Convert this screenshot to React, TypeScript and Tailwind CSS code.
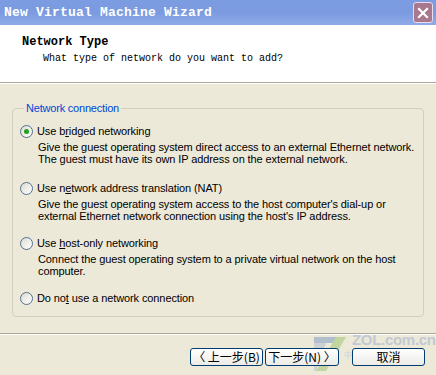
import React, { useState } from "react";

const options = [
  {
    id: "bridged",
    pre: "Use b",
    key: "r",
    post: "idged networking",
    desc: [
      "Give the guest operating system direct access to an external Ethernet network.",
      "The guest must have its own IP address on the external network.",
    ],
  },
  {
    id: "nat",
    pre: "Use n",
    key: "e",
    post: "twork address translation (NAT)",
    desc: [
      "Give the guest operating system access to the host computer's dial-up or",
      "external Ethernet network connection using the host's IP address.",
    ],
  },
  {
    id: "hostonly",
    pre: "Use ",
    key: "h",
    post: "ost-only networking",
    desc: [
      "Connect the guest operating system to a private virtual network on the host",
      "computer.",
    ],
  },
  {
    id: "none",
    pre: "Do no",
    key: "t",
    post: " use a network connection",
    desc: [],
  },
];

const Radio = ({ checked }: { checked: boolean }) => (
  <span className="w-[13px] h-[13px] rounded-full border border-[#56708c] bg-gradient-to-br from-[#dcdcd4] to-white flex items-center justify-center shrink-0">
    {checked && <span className="w-[5px] h-[5px] rounded-full bg-[#21a121]" />}
  </span>
);

const XpButton = ({ children, className = "" }: { children: React.ReactNode; className?: string }) => (
  <button
    className={`relative z-10 h-[18px] border border-[#003c74] rounded-[3px] bg-gradient-to-b from-white to-[#ecebe6] text-[12px] leading-none text-black flex items-center justify-center ${className}`}
    style={{ fontFamily: '"Noto Sans CJK SC", "Liberation Sans", sans-serif' }}
  >
    {children}
  </button>
);

export default function App() {
  const [selected, setSelected] = useState("bridged");

  return (
    <div
      className="w-[436px] h-[375px] bg-[#ece9d8] flex flex-col overflow-hidden relative"
      style={{ fontFamily: '"Liberation Sans", Arial, sans-serif' }}
    >
      {/* title bar */}
      <div className="h-[25px] bg-gradient-to-b from-[#7c9ce2] via-[#7b9ae0] to-[#90abe8] flex items-center justify-between pl-[4px] pr-[3px]">
        <span
          className="text-white font-bold text-[13px] tracking-[0.2px]"
          style={{ fontFamily: '"Liberation Mono", monospace' }}
        >
          New Virtual Machine Wizard
        </span>
        <span className="w-[20px] h-[21px] rounded-[3px] border border-[#e8dcef] bg-[#a9788f] flex items-center justify-center">
          <svg width="12" height="12" viewBox="0 0 12 12">
            <path d="M2 2 L10 10 M10 2 L2 10" stroke="white" strokeWidth="2.2" strokeLinecap="square" />
          </svg>
        </span>
      </div>

      {/* header */}
      <div
        className="h-[58px] bg-white border-b border-[#aca899] pt-[10px] pl-[22px]"
        style={{ fontFamily: '"Liberation Mono", monospace' }}
      >
        <div className="font-bold text-[12px] leading-[14px] text-black">Network Type</div>
        <div className="text-[10px] leading-[14px] text-black pl-[21px] mt-[3px]">
          What type of network do you want to add?
        </div>
      </div>
      <div className="h-px bg-white" />

      {/* body */}
      <div className="flex-1 px-[12px] pt-[18px]">
        <fieldset className="border border-[#d0d0bf] rounded-[4px] h-[215px] pl-[7px] pr-[2px]">
          <legend className="text-[#0046d5] text-[11px] px-[2px] ml-[4px] leading-[13px] tracking-[-0.2px]">
            Network connection
          </legend>
          <div className="flex flex-col pt-[9px] tracking-[-0.1px] whitespace-nowrap">
            {options.map((o, i) => (
              <div key={o.id} className={i === 0 ? "" : i === 1 ? "mt-[16px]" : "mt-[14px]"}>
                <label
                  className="flex items-center gap-[4px] text-[11px] leading-[14px] text-black cursor-default"
                  onClick={() => setSelected(o.id)}
                >
                  <Radio checked={selected === o.id} />
                  <span>
                    {o.pre}
                    <span className="underline">{o.key}</span>
                    {o.post}
                  </span>
                </label>
                {o.desc.length > 0 && (
                  <div className="pl-[18px] mt-[3px] text-[11px] leading-[12px] text-black">
                    {o.desc.map((d) => (
                      <div key={d}>{d}</div>
                    ))}
                  </div>
                )}
              </div>
            ))}
          </div>
        </fieldset>
      </div>

      {/* footer */}
      <div className="h-px bg-[#aca899]" />
      <div className="h-px bg-white" />
      <div className="h-[40px] flex items-start justify-end pt-[13px] pr-[11px]">
        <XpButton className="w-[73px]">〈 上一步(B)</XpButton>
        <XpButton className="w-[74px] ml-[2px]">下一步(N) 〉</XpButton>
        <XpButton className="w-[73px] ml-[13px]">取消</XpButton>
      </div>

      {/* watermark */}
      <svg width="34" height="38" viewBox="0 0 34 38" className="absolute left-[312px] top-[335px] pointer-events-none opacity-60">
        <polygon points="2,2 32,2 30,8 2,8" fill="#8aa3c9" />
        <polygon points="24,2 34,2 14,36 4,36" fill="#a8c97a" />
        <polygon points="2,8 14,8 4,36 2,36" fill="#9fb3cf" opacity="0.7" />
      </svg>
      <div className="absolute left-[352px] top-[332px] pointer-events-none leading-none text-[#b8c2d4] opacity-80">
        <div className="text-[15px] font-bold tracking-[-0.3px]">ZOL.com.cn</div>
      </div>
      <div
        className="absolute left-[344px] top-[351px] text-[8px] leading-none text-[#cdd2da] pointer-events-none"
        style={{ fontFamily: '"Noto Sans CJK SC", sans-serif' }}
      >
        中关村在线
      </div>
    </div>
  );
}
